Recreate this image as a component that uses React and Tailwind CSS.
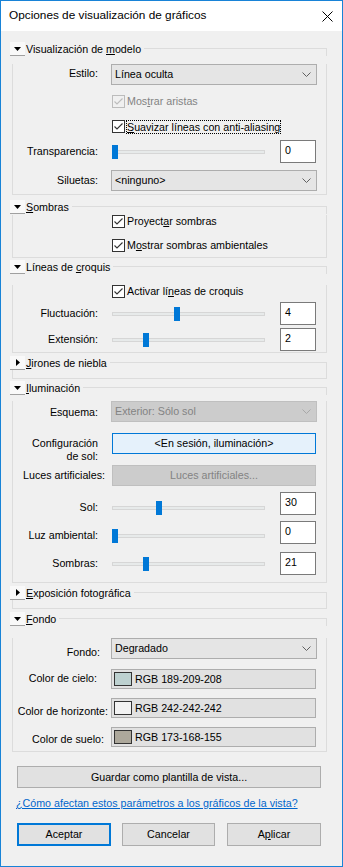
import React from "react";

const Tri = ({ open }) =>
  open ? (
    <svg width="7" height="4" viewBox="0 0 7 4"><polygon points="0,0 7,0 3.5,4" fill="#000" /></svg>
  ) : (
    <svg width="4" height="7" viewBox="0 0 4 7"><polygon points="0,0 4,3.5 0,7" fill="#000" /></svg>
  );

function Section({ title, open = true, mt, bodyClass, children }) {
  return (
    <div className={`ml-[9px] w-[317px] ${mt}`}>
      <div className="flex h-[14px] items-center">
        <div className="flex h-[14px] w-[15px] shrink-0 items-center justify-center border-b border-[#a0a0a0] bg-[#f9f9f9]">
          <Tri open={open} />
        </div>
        <span className="ml-[1px] whitespace-nowrap leading-[14px]">{title}</span>
        <div className="ml-[3px] h-[8px] flex-1 self-end border-r border-t border-[#dcdcdc]" />
      </div>
      <div className={`ml-[2px] border-b border-l border-r border-[#dcdcdc] ${bodyClass}`}>{children}</div>
    </div>
  );
}

function Check({ disabled }) {
  const c = disabled ? "#bcbcbc" : "#333333";
  return (
    <div className={`flex h-[13px] w-[13px] shrink-0 items-center justify-center border ${disabled ? "border-[#bcbcbc] bg-[#f0f0f0]" : "border-[#333333] bg-white"}`}>
      <svg width="11" height="11" viewBox="0 0 11 11">
        <path d="M1.5 5.5 L4 8 L9.5 2.5" fill="none" stroke={c} strokeWidth="1.1" />
      </svg>
    </div>
  );
}

function CheckRow({ mt, disabled, children }) {
  return (
    <div className={`flex h-[13px] items-center pl-[99px] ${mt}`}>
      <Check disabled={disabled} />
      <span className={`ml-[2px] whitespace-nowrap ${disabled ? "text-[#838383]" : ""}`}>{children}</span>
    </div>
  );
}

function Combo({ text, disabled }) {
  return (
    <div
      className={`flex h-[21px] w-[206px] items-center justify-between border pl-[3px] pr-[5px] ${
        disabled ? "border-[#bfbfbf] bg-[#cccccc] text-[#838383]" : "border-[#adadad] bg-[#e5e5e5]"
      }`}
    >
      <span className="whitespace-nowrap">{text}</span>
      <svg width="9" height="5" viewBox="0 0 9 5">
        <path d="M0.5 0.5 L4.5 4.5 L8.5 0.5" fill="none" stroke={disabled ? "#a8a8a8" : "#606060"} />
      </svg>
    </div>
  );
}

function LabelRow({ label, mt, lw = "w-[85px]", lp, cm = "ml-[13px]", children }) {
  return (
    <div className={`flex items-start ${mt}`}>
      <div className={`shrink-0 whitespace-nowrap text-right leading-[13px] ${lw} ${lp}`}>{label}</div>
      <div className={cm}>{children}</div>
    </div>
  );
}

function SliderRow({ label, value, thumb, mt, lmt }) {
  return (
    <div className={`flex items-start ${mt}`}>
      <div className={`flex h-[23px] items-center ${lmt}`}>
        <div className="w-[85px] shrink-0 whitespace-nowrap text-right leading-[13px]">{label}</div>
        <div className="relative ml-[14px] h-[4px] w-[153px] border border-[#d6d6d6] bg-[#e7eaea]">
          <div className={`absolute top-[-6px] h-[14px] w-[6px] bg-[#0078d7] ${thumb}`} />
        </div>
      </div>
      <div className="ml-[15px] h-[23px] w-[36px] shrink-0 border border-[#7a7a7a] bg-white pl-[4px] pt-[3px] leading-[13px]">
        {value}
      </div>
    </div>
  );
}

function ColorBox({ swatch, text }) {
  return (
    <div className="flex h-[20px] w-[205px] items-center border border-[#adadad] bg-[#e1e1e1] pl-[2px]">
      <div className={`h-[14px] w-[18px] border border-[#333333] ${swatch}`} />
      <span className="ml-[3px] whitespace-nowrap">{text}</span>
    </div>
  );
}

export default function App() {
  return (
    <div className="flex h-[867px] w-[343px] flex-col border border-[#1883d7] bg-[#f0f0f0] font-['Liberation_Sans',Arial,sans-serif] text-[10.7px] text-black">
      <div className="flex h-[30px] shrink-0 items-center justify-between bg-white pl-[8px]">
        <span className="whitespace-nowrap text-[11.8px]">Opciones de visualización de gráficos</span>
        <svg className="mr-[9px]" width="11" height="11" viewBox="0 0 11 11">
          <path d="M0.5 0.5 L10.5 10.5 M10.5 0.5 L0.5 10.5" stroke="#000" strokeWidth="1" />
        </svg>
      </div>

      <Section
        mt="mt-[11px]"
        bodyClass="pb-[3px]"
        title={<>Visualización de <u>m</u>odelo</>}
      >
        <LabelRow mt="mt-[8px]" lp="pt-[3px]" label="Estilo:">
          <Combo text="Línea oculta" />
        </LabelRow>
        <CheckRow mt="mt-[10px]" disabled>
          Mos<u>t</u>rar aristas
        </CheckRow>
        <div className="mt-[12px] flex h-[13px] items-center pl-[99px]">
          <Check />
          <span className="ml-[1px] whitespace-nowrap border border-dotted border-black leading-[12px]">
            <u>S</u>uavizar líneas con anti-aliasing
          </span>
        </div>
        <SliderRow mt="mt-[7px]" label="Transparencia:" value="0" thumb="left-[-1px]" />
        <LabelRow mt="mt-[7px]" lp="pt-[4px]" label="Siluetas:">
          <Combo text="<ninguno>" />
        </LabelRow>
      </Section>

      <Section mt="mt-[5px]" bodyClass="pb-[5px]" title={<><u>S</u>ombras</>}>
        <CheckRow mt="mt-[1px]">
          Proyect<u>a</u>r sombras
        </CheckRow>
        <CheckRow mt="mt-[11px]">
          M<u>o</u>strar sombras ambientales
        </CheckRow>
      </Section>

      <Section mt="mt-[2px]" bodyClass="pb-[1px]" title={<>Líneas de <u>c</u>roquis</>}>
        <CheckRow mt="mt-[11px]">
          Activar lí<u>n</u>eas de croquis
        </CheckRow>
        <SliderRow mt="mt-[4px]" label="Fluctuación:" value="4" thumb="left-[61px]" />
        <SliderRow mt="mt-[3px]" label="Extensión:" value="2" thumb="left-[30px]" />
      </Section>

      <Section mt="mt-[3px]" open={false} bodyClass="h-[9px]" title={<><u>J</u>irones de niebla</>} />

      <Section mt="mt-[2px]" bodyClass="pb-[7px]" title={<><u>I</u>luminación</>}>
        <LabelRow mt="mt-[6px]" lp="pt-[5px]" label="Esquema:">
          <Combo text="Exterior: Sólo sol" disabled />
        </LabelRow>
        <LabelRow
          mt="mt-[11px]"
          lp="pt-[4px]"
          cm="ml-[14px]"
          label={<>Configuración<br />de sol:</>}
        >
          <div className="flex h-[21px] w-[204px] items-center justify-center border border-[#0078d7] bg-[#e5f1fb] whitespace-nowrap">
            &lt;En sesión, iluminación&gt;
          </div>
        </LabelRow>
        <LabelRow mt="mt-[2px]" lw="w-[92px]" cm="ml-[7px]" lp="pt-[4px]" label="Luces artificiales:">
          <div className="flex h-[21px] w-[204px] items-center justify-center border border-[#bfbfbf] bg-[#cccccc] text-[#838383] whitespace-nowrap">
            Luces artificiales...
          </div>
        </LabelRow>
        <SliderRow mt="mt-[6px]" lmt="mt-[4px]" label="Sol:" value="30" thumb="left-[43px]" />
        <SliderRow mt="mt-[2px]" lmt="mt-[3px]" label="Luz ambiental:" value="0" thumb="left-[-1px]" />
        <SliderRow mt="mt-[5px]" label="Sombras:" value="21" thumb="left-[30px]" />
      </Section>

      <Section mt="mt-[3px]" open={false} bodyClass="h-[9px]" title={<><u>E</u>xposición fotográfica</>} />

      <Section mt="mt-[3px]" bodyClass="pb-[4px]" title={<><u>F</u>ondo</>}>
        <LabelRow mt="mt-[12px]" lw="w-[87px]" cm="ml-[11px]" lp="pt-[8px]" label="Fondo:">
          <Combo text="Degradado" />
        </LabelRow>
        <LabelRow mt="mt-[10px]" lw="w-[84px]" cm="ml-[14px]" lp="pt-[3px]" label="Color de cielo:">
          <ColorBox swatch="bg-[#bdd1d0]" text="RGB 189-209-208" />
        </LabelRow>
        <LabelRow mt="mt-[9px]" lw="w-[95px]" cm="ml-[3px]" lp="pt-[7px]" label="Color de horizonte:">
          <ColorBox swatch="bg-[#f2f2f2]" text="RGB 242-242-242" />
        </LabelRow>
        <LabelRow mt="mt-[9px]" lw="w-[91px]" cm="ml-[7px]" lp="pt-[6px]" label="Color de suelo:">
          <ColorBox swatch="bg-[#ada89b]" text="RGB 173-168-155" />
        </LabelRow>
      </Section>

      <div className="ml-[16px] mt-[14px] flex h-[22px] w-[304px] items-center justify-center border border-[#adadad] bg-[#e1e1e1] whitespace-nowrap">
        Guardar como plantilla de vista...
      </div>

      <div className="ml-[15px] mt-[8px] whitespace-nowrap leading-[15px] text-[#0066cc] underline">
        ¿Cómo afectan estos parámetros a los gráficos de la vista?
      </div>

      <div className="ml-[16px] mt-[12px] flex">
        <div className="flex h-[23px] w-[94px] items-center justify-center border-2 border-[#0078d7] bg-[#e1e1e1]">Aceptar</div>
        <div className="ml-[11px] flex h-[23px] w-[93px] items-center justify-center border border-[#adadad] bg-[#e1e1e1]">Cancelar</div>
        <div className="ml-[12px] flex h-[23px] w-[94px] items-center justify-center border border-[#adadad] bg-[#e1e1e1]">
          A<u>p</u>licar
        </div>
      </div>
    </div>
  );
}
